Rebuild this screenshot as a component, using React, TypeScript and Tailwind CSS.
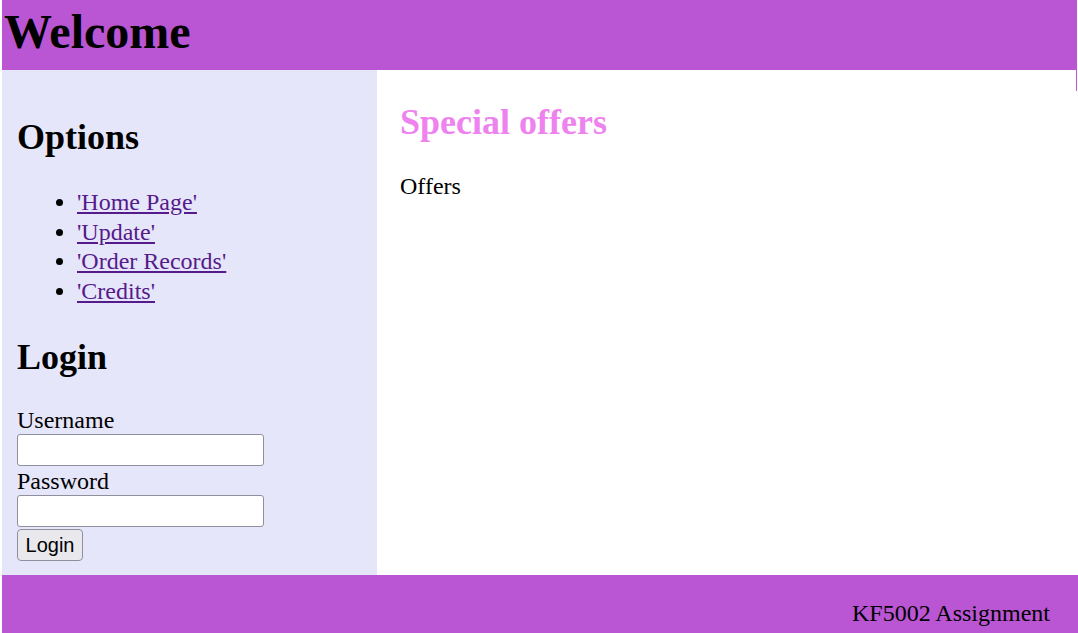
export default function App() {
  return (
    <div className="min-h-[633px] w-[1078px] bg-white pl-[2px] font-['Liberation_Serif',serif] text-[24px] text-black">
      <header className="h-[70px] w-[1075px] bg-[#ba55d3]">
        <h1 className="pl-[2px] text-[48px] font-bold leading-[64px]">Welcome</h1>
      </header>
      <div className="relative flex h-[505px] w-[1075px]">
        <aside className="flex w-[375px] flex-col bg-[#e6e6fa] pl-[15px]">
          <h2 className="mt-[47px] text-[36px] font-bold leading-[40px]">Options</h2>
          <ul className="mt-[31px] list-disc pl-[60px] leading-[29.67px]">
            <li><a href="#" className="text-[#551a8b] underline">'Home Page'</a></li>
            <li><a href="#" className="text-[#551a8b] underline">'Update'</a></li>
            <li><a href="#" className="text-[#551a8b] underline">'Order Records'</a></li>
            <li><a href="#" className="text-[#551a8b] underline">'Credits'</a></li>
          </ul>
          <h2 className="mt-[30px] text-[36px] font-bold leading-[40px]">Login</h2>
          <form className="mt-[28px] flex flex-col items-start" onSubmit={(e) => e.preventDefault()}>
            <label className="h-[29px] leading-[31px]">Username</label>
            <input type="text" className="h-[32px] w-[247px] rounded-[3px] border border-[#8f8f9d] bg-white" />
            <label className="h-[29px] leading-[31px]">Password</label>
            <input type="password" className="h-[32px] w-[247px] rounded-[3px] border border-[#8f8f9d] bg-white" />
            <button type="submit" className="mt-[2px] h-[32px] w-[66px] rounded-[4px] border border-[#8f8f9d] bg-[#e9e9ed] font-['Liberation_Sans',Arial,sans-serif] text-[20px] leading-none">
              Login
            </button>
          </form>
        </aside>
        <main className="flex flex-1 flex-col bg-white pl-[23px]">
          <h2 className="mt-[32px] text-[36px] font-bold leading-[40px] text-[#ee82ee]">Special offers</h2>
          <p className="mt-[30px] leading-[29.67px]">Offers</p>
        </main>
        <div className="absolute right-0 top-0 h-[21px] w-[1px] bg-[#ba55d3]" />
      </div>
      <footer className="flex h-[58px] justify-end bg-[#ba55d3] pr-[28px] pt-[24px] leading-[29.67px]">
        KF5002 Assignment
      </footer>
    </div>
  );
}
